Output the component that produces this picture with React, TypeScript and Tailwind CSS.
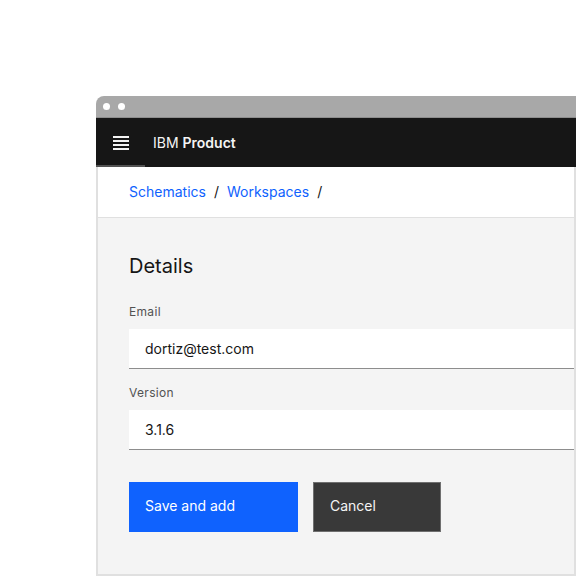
const font = { fontFamily: "Inter, 'Noto Sans', sans-serif" };

const Field = ({ label, value }: { label: string; value: string }) => (
  <div className="flex flex-col">
    <label className="text-xs leading-4 text-[#525252] tracking-[0.32px] mb-[9px]">{label}</label>
    <div className="h-10 bg-white border-b border-[#8d8d8d] flex items-center pl-4 text-sm text-[#161616]">
      {value}
    </div>
  </div>
);

export default function App() {
  return (
    <div className="w-[576px] h-[576px] bg-white overflow-hidden pl-24 pt-24" style={font}>
      <div className="w-[480px] h-[480px] flex flex-col rounded-tl-lg overflow-hidden">
        {/* window chrome */}
        <div className="h-[22px] bg-[#a8a8a8] border-b border-[#8d8d8d] flex items-center gap-2 pl-[7px] shrink-0">
          <span className="w-[7px] h-[7px] rounded-full bg-white" />
          <span className="w-[7px] h-[7px] rounded-full bg-white" />
        </div>

        {/* shell header */}
        <header className="h-[49px] bg-[#161616] flex items-center shrink-0">
          <div className="w-[49px] h-[49px] flex items-center justify-center border-b-2 border-[#525252] pt-[2px]">
            <div className="w-4 flex flex-col gap-[2px]">
              <span className="h-[2px] bg-[#f4f4f4]" />
              <span className="h-[2px] bg-[#f4f4f4]" />
              <span className="h-[2px] bg-[#f4f4f4]" />
              <span className="h-[2px] bg-[#f4f4f4]" />
            </div>
          </div>
          <span className="ml-2 text-sm text-[#f4f4f4]">
            IBM <span className="font-semibold">Product</span>
          </span>
        </header>

        <div className="flex-1 flex flex-col border-l-2 border-r-2 border-b-2 border-[#e0e0e0]">
          {/* breadcrumb */}
          <nav className="h-[51px] bg-white border-b border-[#e0e0e0] flex items-center pl-[31px] text-sm shrink-0">
            <a className="text-[#0f62fe]">Schematics</a>
            <span className="mx-2 text-[#161616]">/</span>
            <a className="text-[#0f62fe]">Workspaces</a>
            <span className="mx-2 text-[#161616]">/</span>
          </nav>

          {/* form */}
          <div className="flex-1 bg-[#f4f4f4] pl-[31px] pt-[34px]">
            <h2 className="text-xl leading-7 text-[#161616] mb-6">Details</h2>
            <div className="flex flex-col gap-4">
              <Field label="Email" value="dortiz@test.com" />
              <Field label="Version" value="3.1.6" />
            </div>
            <div className="flex gap-[15px] mt-8">
              <button className="w-[169px] h-[50px] bg-[#0f62fe] text-white text-sm text-left pl-4 pb-[2px]">
                Save and add
              </button>
              <button className="w-[128px] h-[50px] bg-[#393939] border border-[#6f6f6f] text-[#f4f4f4] text-sm text-left pl-4 pb-[2px]">
                Cancel
              </button>
            </div>
          </div>
        </div>
      </div>
    </div>
  );
}
